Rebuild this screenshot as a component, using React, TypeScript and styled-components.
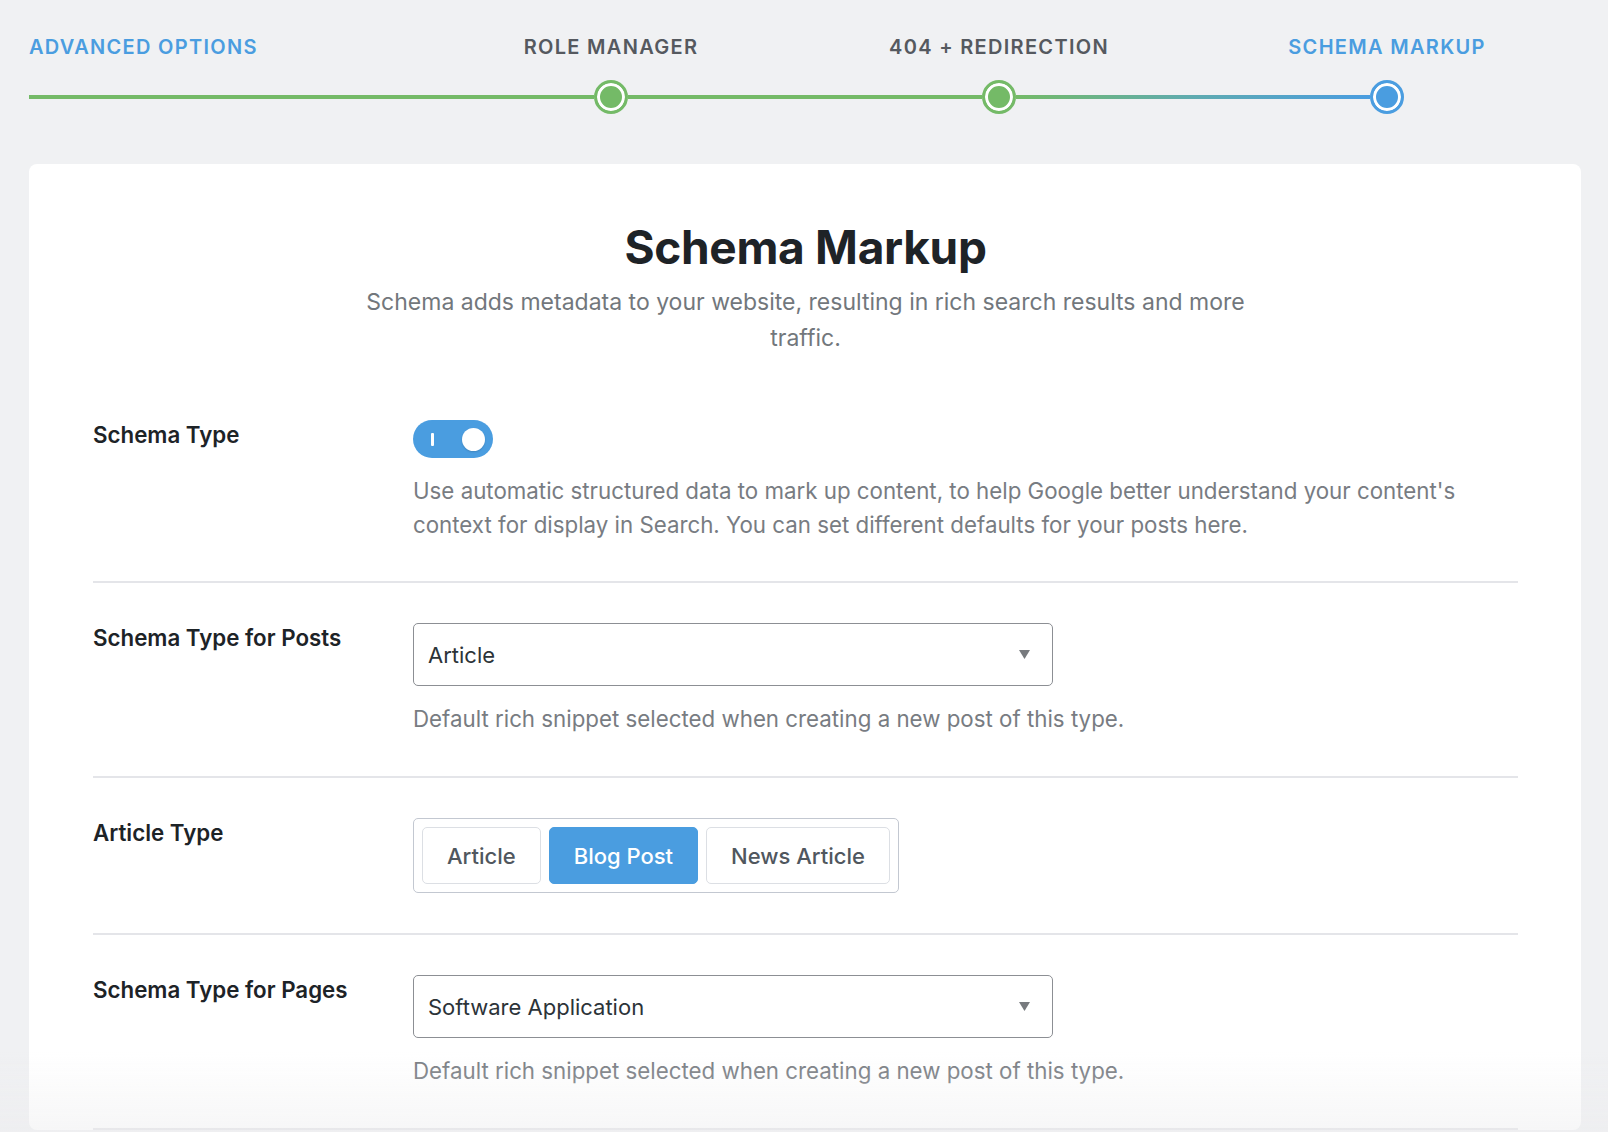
import React from 'react';
import styled, { createGlobalStyle } from 'styled-components';

const GlobalStyle = createGlobalStyle`
  html, body {
    margin: 0;
    padding: 0;
    background: #f0f1f3;
    font-family: Inter, "Noto Sans", sans-serif;
    -webkit-font-smoothing: antialiased;
  }
  * { box-sizing: border-box; }
`;

const GREEN = '#74ba67';
const BLUE = '#4a9de0';

const Page = styled.div`
  padding: 35px 27px 0 29px;
  min-height: 1132px;
`;

const Stepper = styled.div`
  display: grid;
  grid-template-columns: repeat(4, 1fr);
`;

const Step = styled.div<{ $first?: boolean }>`
  display: flex;
  flex-direction: column;
  align-items: ${p => (p.$first ? 'flex-start' : 'center')};
`;

const StepLabel = styled.div<{ $active?: boolean }>`
  font-size: 20px;
  line-height: 24px;
  font-weight: 600;
  letter-spacing: 1.3px;
  text-transform: uppercase;
  color: ${p => (p.$active ? BLUE : '#55595f')};
  white-space: nowrap;
`;

const Track = styled.div`
  margin-top: 21px;
  width: 100%;
  height: 34px;
  display: flex;
  align-items: center;
`;

const Segment = styled.div<{ $bg: string }>`
  flex: 1;
  height: 4px;
  background: ${p => p.$bg};
`;

const Dot = styled.div<{ $color: string }>`
  width: 34px;
  height: 34px;
  flex: none;
  border-radius: 50%;
  border: 3px solid ${p => p.$color};
  background: ${p => p.$color};
  box-shadow: inset 0 0 0 3px #fff;
`;

const Card = styled.div`
  margin-top: 50px;
  background: #fff;
  border-radius: 8px;
  padding: 58px 63px 0 64px;
`;

const Title = styled.h1`
  margin: 0;
  text-align: center;
  font-size: 46px;
  line-height: 50px;
  font-weight: 700;
  color: #1e2327;
  letter-spacing: -0.3px;
`;

const Subtitle = styled.p`
  margin: 12px auto 0;
  max-width: 900px;
  text-align: center;
  font-size: 23px;
  line-height: 36px;
  color: #72777c;
`;

const Form = styled.div`
  margin-top: 64px;
`;

const Row = styled.div<{ $first?: boolean }>`
  display: grid;
  grid-template-columns: 320px 1fr;
  padding: ${p => (p.$first ? '0 0 39px' : '40px 0 40px')};
  border-bottom: 2px solid #e4e5e9;
`;

const Label = styled.div`
  font-size: 22.3px;
  line-height: 28px;
  font-weight: 600;
  color: #1d2327;
  padding-top: 1px;
`;

const Field = styled.div`
  display: flex;
  flex-direction: column;
  align-items: flex-start;
`;

const Help = styled.p<{ $gap: number }>`
  margin: ${p => p.$gap}px 0 0;
  font-size: 22.3px;
  line-height: 34px;
  color: #787c82;
  max-width: 1080px;
`;

const Toggle = styled.div`
  width: 80px;
  height: 38px;
  border-radius: 19px;
  background: ${BLUE};
  display: flex;
  align-items: center;
  justify-content: space-between;
  padding: 0 8px 0 18px;
`;

const ToggleMark = styled.span`
  width: 3px;
  height: 13px;
  border-radius: 1px;
  background: #fff;
`;

const Knob = styled.span`
  width: 23px;
  height: 23px;
  border-radius: 50%;
  background: #fff;
  box-shadow: 0 1px 2px rgba(0, 0, 0, 0.15);
`;

const Select = styled.div`
  width: 640px;
  height: 63px;
  border: 1.5px solid #8c8f94;
  border-radius: 5px;
  display: flex;
  align-items: center;
  justify-content: space-between;
  padding: 0 22px 0 14px;
  font-size: 22px;
  color: #2c3338;
`;

const Group = styled.div`
  display: flex;
  gap: 8px;
  padding: 8px;
  border: 1.5px solid #c3c8d1;
  border-radius: 5px;
`;

const Choice = styled.button<{ $active?: boolean }>`
  height: 57px;
  padding: 0 24px;
  border-radius: 5px;
  border: 1.5px solid ${p => (p.$active ? BLUE : '#dcdfe4')};
  background: ${p => (p.$active ? BLUE : '#fff')};
  color: ${p => (p.$active ? '#fff' : '#50575e')};
  font-family: inherit;
  font-size: 22px;
  font-weight: 500;
  cursor: pointer;
`;

const Fade = styled.div`
  position: fixed;
  left: 0;
  right: 0;
  bottom: 0;
  height: 80px;
  pointer-events: none;
  background: linear-gradient(to bottom, rgba(240, 240, 242, 0), rgba(236, 236, 238, 0.45));
`;

function Caret() {
  return (
    <svg width="11" height="9" viewBox="0 0 11 9">
      <path d="M0 0 H11 L5.5 9 Z" fill="#777a7e" />
    </svg>
  );
}

const steps = [
  { label: 'Advanced Options', active: true },
  { label: 'Role Manager' },
  { label: '404 + Redirection' },
  { label: 'Schema Markup', active: true },
];

function App() {
  return (
    <>
      <GlobalStyle />
      <Page>
        <Stepper>
          <Step $first>
            <StepLabel $active>{steps[0].label}</StepLabel>
            <Track>
              <Segment $bg={GREEN} />
            </Track>
          </Step>
          <Step>
            <StepLabel>{steps[1].label}</StepLabel>
            <Track>
              <Segment $bg={GREEN} />
              <Dot $color={GREEN} />
              <Segment $bg={GREEN} />
            </Track>
          </Step>
          <Step>
            <StepLabel>{steps[2].label}</StepLabel>
            <Track>
              <Segment $bg={GREEN} />
              <Dot $color={GREEN} />
              <Segment $bg={`linear-gradient(to right, ${GREEN}, #5fabb0)`} />
            </Track>
          </Step>
          <Step>
            <StepLabel $active>{steps[3].label}</StepLabel>
            <Track>
              <Segment $bg={`linear-gradient(to right, #5fabb0, ${BLUE})`} />
              <Dot $color={BLUE} />
              <Segment $bg="transparent" />
            </Track>
          </Step>
        </Stepper>

        <Card>
          <Title>Schema Markup</Title>
          <Subtitle>
            Schema adds metadata to your website, resulting in rich search results and more traffic.
          </Subtitle>

          <Form>
            <Row $first>
              <Label>Schema Type</Label>
              <Field>
                <Toggle>
                  <ToggleMark />
                  <Knob />
                </Toggle>
                <Help $gap={16}>
                  Use automatic structured data to mark up content, to help Google better understand your
                  content's context for display in Search. You can set different defaults for your posts here.
                </Help>
              </Field>
            </Row>

            <Row>
              <Label>Schema Type for Posts</Label>
              <Field>
                <Select>
                  <span>Article</span>
                  <Caret />
                </Select>
                <Help $gap={16}>Default rich snippet selected when creating a new post of this type.</Help>
              </Field>
            </Row>

            <Row>
              <Label>Article Type</Label>
              <Field>
                <Group>
                  <Choice>Article</Choice>
                  <Choice $active>Blog Post</Choice>
                  <Choice>News Article</Choice>
                </Group>
              </Field>
            </Row>

            <Row>
              <Label>Schema Type for Pages</Label>
              <Field>
                <Select>
                  <span>Software Application</span>
                  <Caret />
                </Select>
                <Help $gap={16}>Default rich snippet selected when creating a new post of this type.</Help>
              </Field>
            </Row>
          </Form>
        </Card>
      </Page>
      <Fade />
    </>
  );
}

export default App;
